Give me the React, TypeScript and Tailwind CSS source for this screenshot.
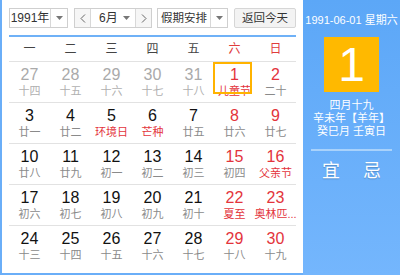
import React from "react";

type Cell = { n: number; l: string; gray?: boolean; rn?: boolean; rl?: boolean; today?: boolean };

const rows: Cell[][] = [
  [
    { n: 27, l: "十四", gray: true },
    { n: 28, l: "十五", gray: true },
    { n: 29, l: "十六", gray: true },
    { n: 30, l: "十七", gray: true },
    { n: 31, l: "十八", gray: true },
    { n: 1, l: "儿童节", rn: true, rl: true, today: true },
    { n: 2, l: "二十", rn: true },
  ],
  [
    { n: 3, l: "廿一" },
    { n: 4, l: "廿二" },
    { n: 5, l: "环境日", rl: true },
    { n: 6, l: "芒种", rl: true },
    { n: 7, l: "廿五" },
    { n: 8, l: "廿六", rn: true },
    { n: 9, l: "廿七", rn: true },
  ],
  [
    { n: 10, l: "廿八" },
    { n: 11, l: "廿九" },
    { n: 12, l: "初一" },
    { n: 13, l: "初二" },
    { n: 14, l: "初三" },
    { n: 15, l: "初四", rn: true },
    { n: 16, l: "父亲节", rn: true, rl: true },
  ],
  [
    { n: 17, l: "初六" },
    { n: 18, l: "初七" },
    { n: 19, l: "初八" },
    { n: 20, l: "初九" },
    { n: 21, l: "初十" },
    { n: 22, l: "夏至", rn: true, rl: true },
    { n: 23, l: "奥林匹...", rn: true, rl: true },
  ],
  [
    { n: 24, l: "十三" },
    { n: 25, l: "十四" },
    { n: 26, l: "十五" },
    { n: 27, l: "十六" },
    { n: 28, l: "十七" },
    { n: 29, l: "十八", rn: true },
    { n: 30, l: "十九", rn: true },
  ],
];

const weekdays = ["一", "二", "三", "四", "五", "六", "日"];

const Caret = () => (
  <svg width="7" height="4" viewBox="0 0 7 4">
    <path d="M0 0 L7 0 L3.5 4 Z" fill="#777" />
  </svg>
);

export default function App() {
  return (
    <div
      className="w-[400px] h-[275px] flex bg-white overflow-hidden"
      style={{ fontFamily: '"Liberation Sans", "Noto Sans CJK SC", sans-serif' }}
    >
      <div className="w-[303px] h-[275px] border-l-2 border-b-2 border-[#6aaef8] pl-[7px] pr-[7px] pt-[8px] flex flex-col">
        <div className="flex h-[20px] text-[12px] text-[#333]">
          <div className="w-[59px] h-[20px] border border-[#cfcfcf] flex items-center">
            <span className="w-[40px] text-center leading-[18px]">1991年</span>
            <div className="h-full border-l border-[#d8d8d8] flex-1 flex items-center justify-center">
              <Caret />
            </div>
          </div>
          <div className="ml-[6px] w-[78px] h-[20px] border border-[#cfcfcf] flex items-center">
            <div className="w-[16px] h-full flex items-center justify-center text-[#666] bg-[#f6f6f6] border-r border-[#d8d8d8]">
              <svg width="6" height="9" viewBox="0 0 6 9"><path d="M5 0.5 L1 4.5 L5 8.5" stroke="#666" fill="none" strokeWidth="1" /></svg>
            </div>
            <div className="flex-1 h-full flex items-center">
              <span className="ml-[8px] leading-[18px]">6月</span>
              <span className="ml-auto mr-[5px] flex"><Caret /></span>
            </div>
            <div className="w-[16px] h-full flex items-center justify-center bg-[#f6f6f6] border-l border-[#d8d8d8]">
              <svg width="6" height="9" viewBox="0 0 6 9"><path d="M1 0.5 L5 4.5 L1 8.5" stroke="#666" fill="none" strokeWidth="1" /></svg>
            </div>
          </div>
          <div className="ml-[5px] w-[71px] h-[20px] border border-[#cfcfcf] flex items-center">
            <span className="w-[52px] text-center leading-[18px] text-[11.5px]">假期安排</span>
            <div className="h-full border-l border-[#d8d8d8] flex-1 flex items-center justify-center">
              <Caret />
            </div>
          </div>
          <div className="ml-[6px] w-[62px] h-[20px] border border-[#d6d6d6] bg-[#f3f3f3] rounded-[2px] flex items-center justify-center leading-[18px] text-[11.5px]">
            返回今天
          </div>
        </div>
        <div className="mt-[7px] h-[2px] bg-[#6fb1f7]" />
        <div className="grid grid-cols-7 h-[24px] items-center text-[12px]">
          {weekdays.map((w, i) => (
            <div key={w} className={`text-center ${i >= 5 ? "text-[#e03c3c]" : "text-[#444]"}`}>
              {w}
            </div>
          ))}
        </div>
        {rows.map((row, ri) => (
          <div key={ri} className="grid grid-cols-7 h-[41px] border-t border-[#e2e2e2]">
            {row.map((c, ci) => (
              <div key={ci} className="relative flex flex-col items-center pt-[4px]">
                {c.today && (
                  <span className="absolute left-[-1px] right-[3px] top-[0px] h-[32px] border-2 border-[#ffb300]" />
                )}
                <span
                  className={`text-[16px] leading-[18px] ${
                    c.gray ? "text-[#aaaaaa]" : c.rn ? "text-[#e3343c]" : "text-[#111]"
                  }`}
                >
                  {c.n}
                </span>
                <span
                  className={`text-[11px] leading-[13px] mt-[1px] whitespace-nowrap ${
                    c.rl ? "text-[#e3343c]" : c.gray ? "text-[#b0b0b0]" : "text-[#8a8a8a]"
                  }`}
                >
                  {c.l}
                </span>
              </div>
            ))}
          </div>
        ))}
      </div>
      <div className="flex-1 h-[275px] bg-gradient-to-b from-[#5ca7f7] to-[#74b6fd] flex flex-col items-center text-white">
        <div className="mt-[13px] text-[11px] leading-[14px] whitespace-nowrap">1991-06-01 星期六</div>
        <div className="mt-[10px] w-[55px] h-[55px] bg-[#ffb900] flex items-center justify-center text-[48px] leading-none font-light">
          1
        </div>
        <div className="mt-[7px] text-[11px] leading-[13px] text-center whitespace-nowrap">
          <div>四月十九</div>
          <div>辛未年【羊年】</div>
          <div>癸巳月 壬寅日</div>
        </div>
        <div className="mt-[11px] w-[81px] h-[2px] bg-[#a9d2fb]" />
        <div className="mt-[10px] flex gap-[23px] text-[18px] leading-[20px]" style={{ textShadow: "0 1px 1px rgba(0,0,0,0.2)" }}>
          <span>宜</span>
          <span>忌</span>
        </div>
      </div>
    </div>
  );
}
